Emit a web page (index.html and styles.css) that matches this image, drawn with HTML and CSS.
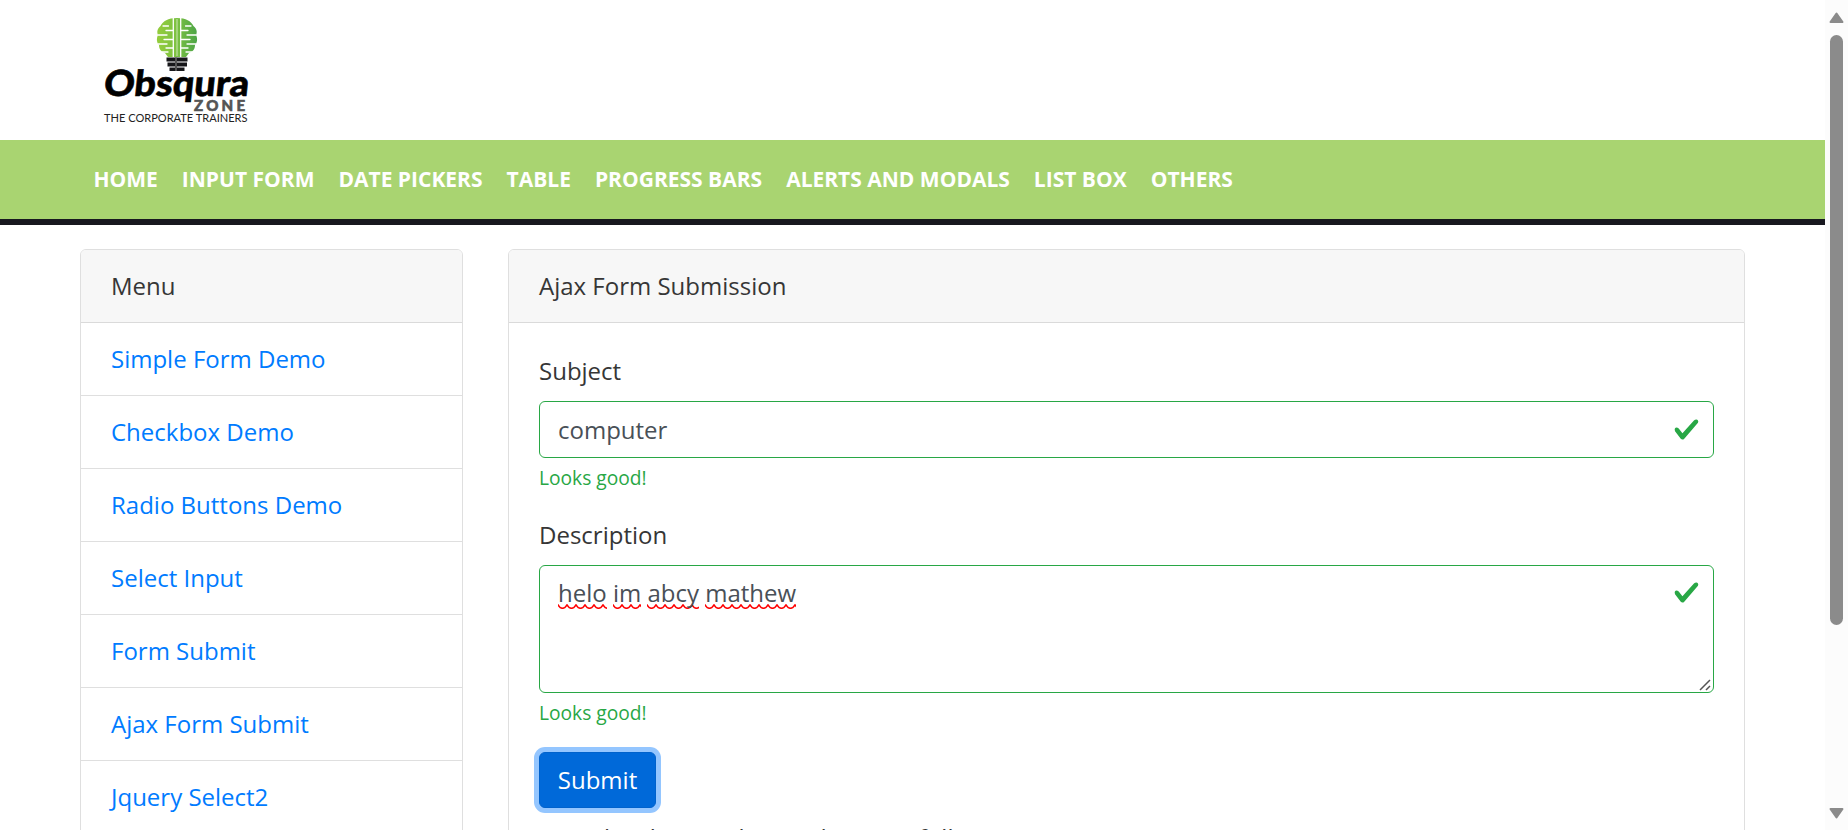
FILE: index.html
```html
<!DOCTYPE html>
<html lang="en">
<head>
<meta charset="utf-8">
<title>Obsqura Zone</title>
<link rel="stylesheet" href="styles.css">
</head>
<body>
<div class="window">
  <div class="page">
    <header class="top">
      <svg class="logo" width="160" height="120" viewBox="98 10 160 120" role="img" aria-label="Obsqura Zone">
        <defs>
          <linearGradient id="leaf" x1="0" x2="1"><stop offset="0" stop-color="#94cd3c"/><stop offset=".5" stop-color="#7cc142"/><stop offset="1" stop-color="#4ba446"/></linearGradient>
        </defs>
        <path fill="url(#leaf)" d="M177 18c-9 0-14 3-16.500 8c-4 3-3.500 7-2.500 9c-2 4-1 8 1 10c0 5 3 7 6 8l3 4h18l3-4c3-1 6-3 6-8c2-2 3-6 1-10c1-2 1.500-6-2.500-9c-2.500-5-7.500-8-16.500-8z"/>
        <g fill="none" stroke="#fff" stroke-width="1.300" stroke-linecap="round">
          <path d="M173.300 18v39M180.700 18v39"/>
          <path d="M163 26h5.500M166 30.500h7M158 35h9M164 39.500h9M158 44h9M166 48h7M162 52h6M191 26h-5.500M188 30.500h-7M196 35h-9M190 39.500h-9M196 44h-9M188 48h-7M192 52h-6"/>
        </g>
        <path stroke="#dff0cf" stroke-width=".8" d="M177 19v37"/>
        <path fill="#17171a" d="M166.500 57.500h21v4h-21zM167.500 62.500h19.500v4h-19.500zM169.500 67.500h15v3.500h-15z"/>
        <path fill="#555" d="M175 57.500h2v13.500h-2z"/>
        <text class="brand" x="103" y="96" textLength="145" lengthAdjust="spacingAndGlyphs" transform="translate(10.100) skewX(-6)">Obsqura</text>
        <text class="zone" x="194" y="110.500" textLength="51" lengthAdjust="spacing">ZONE</text>
        <text class="tagline" x="104" y="122" textLength="143.500" lengthAdjust="spacingAndGlyphs">THE CORPORATE TRAINERS</text>
      </svg>
    </header>
    <nav class="nav">
      <a>HOME</a><a>INPUT FORM</a><a>DATE PICKERS</a><a>TABLE</a><a>PROGRESS BARS</a><a>ALERTS AND MODALS</a><a>LIST BOX</a><a>OTHERS</a>
    </nav>
    <main class="content">
      <aside class="card">
        <div class="card-header">Menu</div>
        <ul class="menu">
          <li>Simple Form Demo</li><li>Checkbox Demo</li><li>Radio Buttons Demo</li><li>Select Input</li><li>Form Submit</li><li>Ajax Form Submit</li><li>Jquery Select2</li><li></li>
        </ul>
      </aside>
      <section class="card">
        <div class="card-header">Ajax Form Submission</div>
        <div class="card-body">
          <div class="label">Subject</div>
          <div class="field">
            <span>computer</span>
            <svg class="check" viewBox="0 0 8 8"><path fill="#28a745" d="M2.300 6.730L.6 4.530c-.4-1.040.46-1.400 1.100-.8l1.100 1.400 3.400-3.800c.6-.63 1.600-.27 1.200.7l-4 4.600c-.43.5-.8.4-1.100.1z"/></svg>
          </div>
          <div class="feedback">Looks good!</div>
          <div class="label">Description</div>
          <div class="field area">
            <span><u>helo</u> <u>im</u> <u>abcy</u> <u>mathew</u></span>
            <svg class="check" viewBox="0 0 8 8"><path fill="#28a745" d="M2.300 6.730L.6 4.530c-.4-1.040.46-1.400 1.100-.8l1.100 1.400 3.400-3.800c.6-.63 1.600-.27 1.200.7l-4 4.600c-.43.5-.8.4-1.100.1z"/></svg>
            <svg class="grip" width="12" height="12" viewBox="0 0 12 12"><path d="M1 11L11 1M7 11l4-4" fill="none" stroke="#555" stroke-width="1.500"/></svg>
          </div>
          <div class="feedback">Looks good!</div>
          <button class="submit">Submit</button>
          <div class="message">Form has been submitted successfully!</div>
        </div>
      </section>
    </main>
  </div>
  <div class="scrollbar">
    <svg width="15" height="11" viewBox="0 0 15 11"><path d="M7.500 1.500L13.500 10h-12z" fill="#8b8b8b" stroke="#8b8b8b" stroke-width="2" stroke-linejoin="round"/></svg>
    <div class="thumb"></div>
    <svg class="down" width="15" height="11" viewBox="0 0 15 11"><path d="M7.500 9.500L13.500 1h-12z" fill="#8b8b8b" stroke="#8b8b8b" stroke-width="2" stroke-linejoin="round"/></svg>
  </div>
</div>
</body>
</html>
```
FILE: styles.css
```css
* { box-sizing: border-box; }
body { margin: 0; font: 24px/36px "Open Sans", sans-serif; color: #363636; background: #fff; }
.window { display: grid; grid-template-columns: 1fr 23px; height: 830px; overflow: hidden; }
.page { height: 830px; overflow: hidden; }
.top { height: 140px; padding: 10px 0 0 98px; }
.logo { display: block; }
.brand { font: 900 36px Lato, sans-serif; fill: #000; stroke: #000; stroke-width: .6px; }
.zone { font: 900 15px Lato, sans-serif; fill: #555; stroke: #555; stroke-width: .6px; }
.tagline { font: 10.5px Lato, sans-serif; fill: #222; }
.nav { display: flex; gap: 24px; height: 85px; padding: 22px 0 0 93.5px; background: #a9d471; border-bottom: 6px solid #18181f; color: #fff; font-size: 21px; font-weight: 700; line-height: 34px; white-space: nowrap; }
.content { display: grid; grid-template-columns: 383px 1237px; gap: 45px; padding: 24px 0 0 80px; }
.card { border: 1px solid #dfdfdf; border-radius: 6px; overflow: hidden; }
.card-header { height: 73px; padding: 18px 30px; background: #f7f7f7; border-bottom: 1px solid #dadada; }
.menu { margin: 0; padding: 0; list-style: none; color: #007bff; }
.menu li { height: 73px; padding: 18px 30px; border-bottom: 1px solid #dfdfdf; }
.card-body { padding: 30px; }
.label { height: 48px; }
.field { display: flex; justify-content: space-between; position: relative; height: 57px; padding: 10px 13px 10px 18px; border: 1px solid #28a745; border-radius: 6px; color: #495057; }
.area { height: 128px; padding-top: 9px; }
.check { width: 27px; height: 27px; margin-top: 4px; }
.grip { position: absolute; right: 2px; bottom: 1px; }
.field u { text-decoration: none; background: url("data:image/svg+xml,%3Csvg xmlns='http://www.w3.org/2000/svg' width='9' height='5'%3E%3Cpath d='M-1 .2L0 .8Q2 4.300 4.500 4.300T9 .8L10 .2' fill='none' stroke='red' stroke-width='1.500'/%3E%3C/svg%3E") left bottom / 9px 5px repeat-x; }
.feedback { margin-top: 5px; height: 29px; margin-bottom: 25px; font-size: 19.2px; line-height: 29px; color: #28a745; }
.submit { display: block; width: 117px; height: 56px; padding: 0; border: 1px solid #0062cc; border-radius: 6px; background: #0069d9; color: #fff; font: 24px/36px "Open Sans", sans-serif; box-shadow: 0 0 0 5px #94c6ff; }
.message { margin-top: 12px; }
.scrollbar { display: flex; flex-direction: column; align-items: center; padding: 12px 0 11px; background: #fcfcfc; }
.thumb { width: 13px; height: 590px; margin-top: 12px; border-radius: 7px; background: #8b8b8b; }
.down { margin-top: auto; }
```
